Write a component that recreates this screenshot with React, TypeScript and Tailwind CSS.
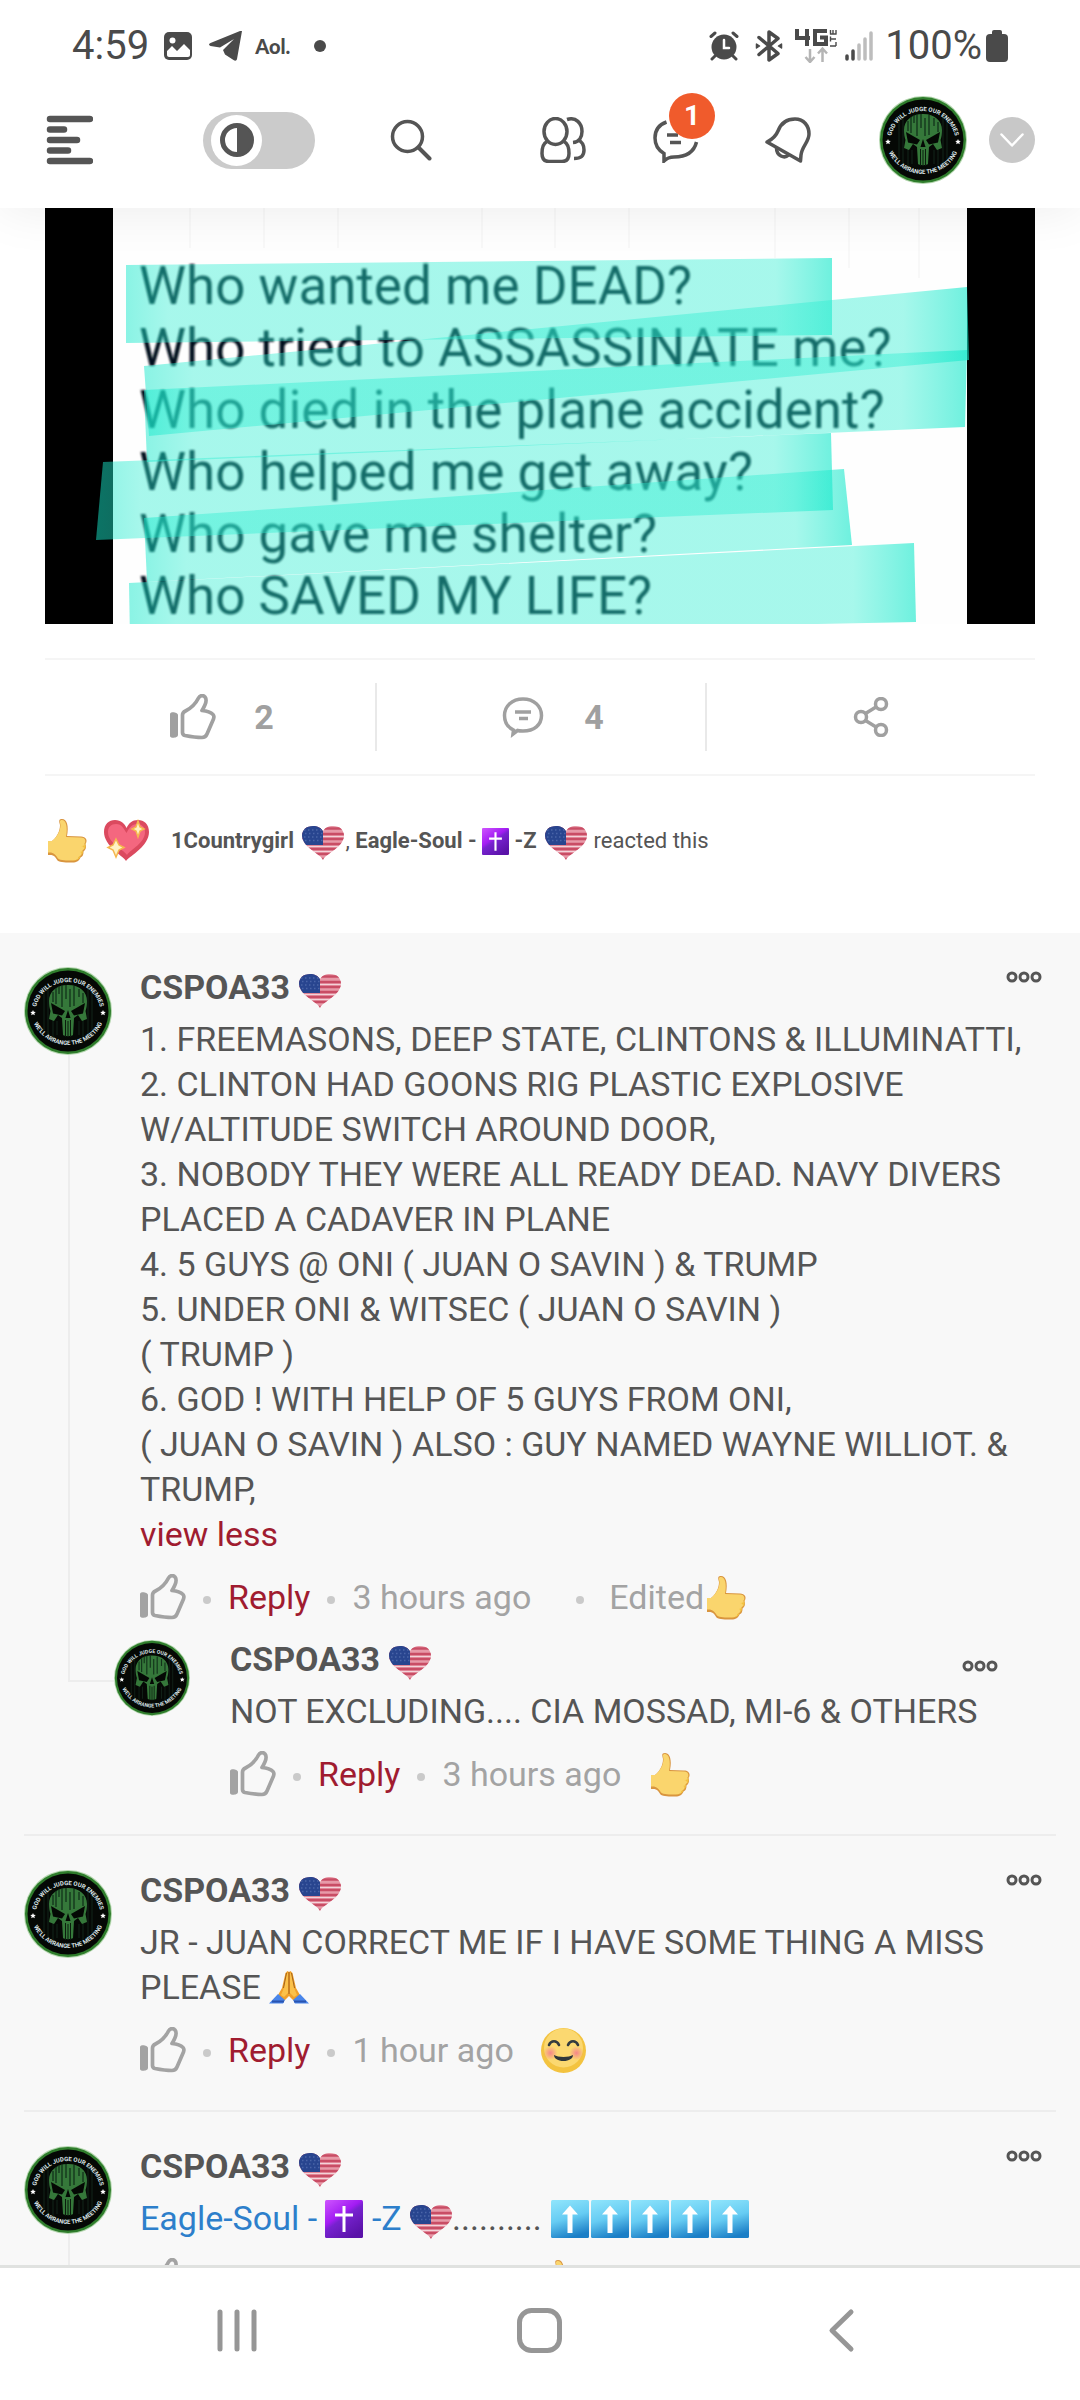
import { useId } from 'react';
import type { ReactNode } from 'react';
import clsx from 'clsx';

type Reaction = 'like' | 'blush';

interface CommentData {
  id: number;
  body: ReactNode;
  expanded?: boolean;
  time: string;
  edited?: boolean;
  reaction: Reaction;
  hasThread?: boolean;
  replies?: CommentData[];
}

/* ---------- emoji ---------- */

function FlagHeart({ className }: { className?: string }) {
  const id = useId();
  return (
    <svg viewBox="0 0 42 34" className={clsx('inline-block h-[34px] w-[42px] shrink-0', className ?? 'align-[-9px]')} role="img" aria-label="US flag heart">
      <clipPath id={id}>
        <path d="M21 34C19 28 1 22 0 10 0 4 4 0 11 0c5 0 8 2 10 5 2-3 5-5 10-5 7 0 11 4 11 10-1 12-19 18-21 24Z" />
      </clipPath>
      <g clipPath={`url(#${id})`}>
        <rect width="42" height="34" fill="#e79aa8" />
        <path d="M0 2.5h42M0 8h42M0 13h42M0 18h42M0 23h42M0 28h42M0 33h42" stroke="#c94d65" strokeWidth="2.4" />
        <path d="M21 10.5h21M0 20.5h42M0 25.5h42" stroke="#f3d3d9" strokeWidth="1" />
        <rect width="21" height="19" fill="#28458f" />
        <path d="M2 4h18M3 7.5h18M2 11h18M3 14.5h18" stroke="#4a65a8" strokeWidth="1.4" strokeDasharray="1.5 2.5" />
      </g>
    </svg>
  );
}

function CrossEmoji({ small }: { small?: boolean }) {
  const id = useId();
  return (
    <svg
      viewBox="0 0 38 38"
      className={clsx('inline-block shrink-0', small ? 'size-[27px] align-[-7px]' : 'size-[38px] align-[-8px]')}
      role="img"
      aria-label="cross"
    >
      <defs>
        <linearGradient id={id} x1="0" y1="0" x2="0.7" y2="1">
          <stop offset="0" stopColor="#cf55ff" />
          <stop offset="0.45" stopColor="#a21cf2" />
          <stop offset="0.55" stopColor="#7722cf" />
          <stop offset="1" stopColor="#5a12a8" />
        </linearGradient>
      </defs>
      <rect width="38" height="38" rx="1.5" fill={`url(#${id})`} />
      <path d="M19 6v26M10 15h18" stroke="#fff" strokeWidth="3" />
    </svg>
  );
}

function UpArrowEmoji() {
  const id = useId();
  return (
    <svg viewBox="0 0 38 38" className="mx-px inline-block size-[38px] align-[-8px]" role="img" aria-label="up">
      <defs>
        <linearGradient id={id} x1="0.2" y1="0" x2="0.5" y2="1">
          <stop offset="0" stopColor="#8de3fb" />
          <stop offset="0.5" stopColor="#66ccf3" />
          <stop offset="1" stopColor="#1b7ec6" />
        </linearGradient>
      </defs>
      <rect width="38" height="38" rx="1.5" fill={`url(#${id})`} />
      <path d="M19 5.500 27 14.500h-5.500V33h-5V14.500H11Z" fill="#fff" />
    </svg>
  );
}

function PrayEmoji() {
  return (
    <svg viewBox="0 0 40 34" className="inline-block h-[34px] w-10 align-[-5px]" role="img" aria-label="praying hands">
      <path d="M18.500 1 16.500 3 13 18 9 25l6 6 5-5 5 5 6-6-4-7L23.500 3 21.500 1 20 2Z" fill="#f0a02a" />
      <path d="M17.500 4 14.500 19 12 25l3 2 4-4V3ZM22.500 4l3 15 2.500 6-3 2-4-4V3Z" fill="#fbc14a" />
      <path d="M20 2v22M17.500 3 14.500 18M22.500 3l3 15" stroke="#a5631a" strokeWidth="1" fill="none" />
      <path d="M9 24 0 33.500h14L16 30ZM31 24l9 9.500H26L24 30Z" fill="#4a86ea" />
      <path d="M3 31.500h12M37 31.500H25" stroke="#2a54b0" strokeWidth="2" />
    </svg>
  );
}

function ThumbEmoji() {
  return (
    <svg viewBox="0 0 45 45" className="size-[45px] shrink-0" role="img" aria-label="Like reaction">
      <path
        d="M3 23h4c5-4 8-10 8-16-1-4-1.500-6 2-6 5 0 7 7 5 17l14 .5c5 0 7 4 4.500 7.500 1 3 .5 5.500-2 7.500 0 3-.5 5-3 6-1 3-4 5-8 5-6 0-12 0-15-2-2-3-3-5-6-5.500H3Z"
        fill="#d9953f"
      />
      <path
        d="M3 23h4c5-4 8.500-10 8.500-16C14.800 3.500 14.500 2 17 2c4 0 6 7 4 17l15 .5c4 0 5.500 3.500 3.500 6 1 3 0 5.500-2 7-.5 3-1 5-3 6-1 3-4 4-7 4-6 0-12 0-14.500-2-2-3-4-5.500-7-6H3Z"
        fill="#fad56d"
      />
      <path d="M41 24c0 3-2 4-5 4 4 .5 4.500 5-1 6 3 1 1.500 5-2 5 1 3-5 4-8 4h4c3-1 6-2 6.500-5 2-1 2.500-3 2.500-5.500 3-2 3-5 2-7Z" fill="#f3c141" />
    </svg>
  );
}

function SparkHeartEmoji() {
  return (
    <svg viewBox="0 0 45 45" className="size-[45px] shrink-0" role="img" aria-label="Love reaction">
      <path d="M22 43C18 37 0 28 0 14 0 6 5 2 11 2c6 0 10 4 11.500 8C25 5 28 2 34 2c6 0 11 4 11 12 0 14-18 23-23 29Z" fill="#db4a5f" />
      <path d="M23 37C19 31 4 25 4 14c0-5 3-8 8-8 6 0 8 5 10.500 9C25 10 28 6 33 6c5 0 8 3 8 8 0 11-14 17-18 23Z" fill="#f4677f" />
      <path d="m34 3 2 6 4 2-4 2-2 6-2-6-4-2 4-2ZM12 21l3 6 5 2.500-5 2.500-3 7-3-7-5-2.500L9 27Z" fill="#fff2c4" stroke="#f5b84e" strokeWidth="1.500" />
    </svg>
  );
}

function BlushEmoji() {
  const id = useId();
  return (
    <svg viewBox="0 0 45 45" className="size-[45px] shrink-0" role="img" aria-label="Happy reaction">
      <radialGradient id={id}>
        <stop offset="0" stopColor="#f4868a" />
        <stop offset="1" stopColor="#f4868a" stopOpacity="0" />
      </radialGradient>
      <circle cx="22.500" cy="22.500" r="22.500" fill="#f3c340" />
      <circle cx="22.500" cy="20" r="19.500" fill="#fbd870" />
      <circle cx="9.500" cy="25" r="7" fill={`url(#${id})`} />
      <circle cx="35.500" cy="25" r="7" fill={`url(#${id})`} />
      <path d="M8 17c2-5 8-5 10 0M27 17c2-5 8-5 10 0" stroke="#333b3f" strokeWidth="2.600" fill="none" strokeLinecap="round" />
      <path d="M13 27c4 2.500 15 2.500 19 0 0 3.500-4 6-9.500 6S13 30.500 13 27Z" fill="#2f373b" />
    </svg>
  );
}

/* ---------- icons ---------- */

function ThumbIcon() {
  return (
    <svg viewBox="0 0 46 46" className="size-[46px]" fill="none" stroke="currentColor" strokeWidth="3.700" strokeLinejoin="round" aria-hidden="true">
      <path d="M0 20c0-3 8-2 8 1v20c0 3-8 4-8 1Z" fill="currentColor" stroke="none" />
      <path d="M12.500 21c0-2 1-3 3-4 6-3 10-7 13-13 1.500-3 5-3 6.500-1 2.500 3 .5 8-3 13.500 5 .5 9 2 11 4 1.500 1.500 1 3 .5 4.500L37 40c-1 2.500-2 3.500-5 3.500-7 0-12-1-17-2-2-.5-2.500-1-2.500-3Z" />
    </svg>
  );
}

function CommentIcon() {
  return (
    <svg viewBox="0 0 42 42" className="size-[42px]" fill="none" stroke="currentColor" strokeWidth="3.500" aria-hidden="true">
      <path d="M11.500 34C5 31 2.500 26 2.500 19.500 2.500 10 10 3 21 3s18.500 7 18.500 16.500-7.500 15.500-18.500 15.500c-2 0-4 0-5.500-.5L11 38Z" />
      <path d="M13 16h16M17 22.500h9" />
    </svg>
  );
}

function ShareIcon() {
  return (
    <svg viewBox="0 0 36 40" className="h-10 w-9" fill="none" stroke="currentColor" strokeWidth="3.500" aria-hidden="true">
      <circle cx="28" cy="7" r="5.500" />
      <circle cx="28" cy="33" r="5.500" />
      <circle cx="8" cy="20" r="5.500" />
      <path d="m12.500 16.500 10.500-6.500M12.500 23.500 23 30" />
    </svg>
  );
}

function Avatar({ className }: { className?: string }) {
  const id = useId();
  return (
    <svg viewBox="0 0 88 88" className={clsx('shrink-0', className)} role="img" aria-label="CSPOA33">
      <defs>
        <path id={`${id}t`} d="M11 48a33 33 0 1 1 66 0" />
        <path id={`${id}b`} d="M6 40a38 38 0 1 0 76 0" />
      </defs>
      <circle cx="44" cy="44" r="44" fill="#b3d6ae" />
      <circle cx="44" cy="44" r="43" fill="#2f7d2c" />
      <circle cx="44" cy="44" r="40.500" fill="#050805" />
      <path d="M20 25v38M24 20v48M29 52v20M33 54v14M55 54v14M59 52v20M64 20v48M68 25v38" stroke="#13241a" strokeWidth="1" />
      {/* skull */}
      <path
        d="M44 18c-12 0-19 7-19 16 0 4 .5 7 1.500 10l-1.500 8 5 2 4-6 4 3 1 17c1.500 1.500 8.500 1.500 10 0l1-17 4-3 4 6 5-2-1.500-8c1-3 1.500-6 1.500-10 0-9-7-16-19-16Z"
        fill="#35783a"
      />
      <path d="M27 36l14 8-3 4.500-9-2ZM61 36l-14 8 3 4.500 9-2ZM44 43l2.500 8h-5Z" fill="#040804" />
      <path d="M41.500 53v17M44 54v16M46.500 53v17" stroke="#0b1c0d" strokeWidth="1" />
      <path d="M29 25v10M32 21v16M35 19v8M38 18v22M42 18v14M46 22v18M50 19v20M55 22v8M59 26v10" stroke="#12321a" strokeWidth="1.300" />
      <g fill="#dde6ea" className="font-['Roboto',sans-serif] text-[6px] font-bold" textAnchor="middle">
        <text>
          <textPath href={`#${id}t`} startOffset="50%">GOD WILL JUDGE OUR ENEMIES</textPath>
        </text>
        <text>
          <textPath href={`#${id}b`} startOffset="50%">WE'LL ARRANGE THE MEETING</textPath>
        </text>
      </g>
      <path d="m9 43 .8 1.800 2 .2-1.500 1.300.5 2-1.800-1-1.800 1 .5-2L6.200 45l2-.2ZM79 43l.8 1.800 2 .2-1.500 1.300.5 2-1.800-1-1.800 1 .5-2-1.500-1.300 2-.2Z" fill="#fff" />
    </svg>
  );
}

/* ---------- header ---------- */

function StatusBar() {
  return (
    <div className="flex h-[72px] items-center px-[72px] pt-5 text-[#4a4a4a]">
      <span className="text-[40px] leading-none">4:59</span>
      <svg viewBox="0 0 30 30" className="ml-3.5 size-[30px]" aria-hidden="true">
        <rect x="1" y="1" width="28" height="28" rx="5" fill="currentColor" />
        <circle cx="9.500" cy="9.500" r="3" fill="#fff" />
        <path d="M4 20l5-5 5 5 7-7 6 6v5c0 1-1 2-2 2H6c-1 0-2-1-2-2Z" fill="#fff" />
      </svg>
      <svg viewBox="0 0 34 30" className="ml-4 h-[30px] w-[34px]" aria-hidden="true">
        <path d="M33 0 28 28c-.5 2-2 2-3.500 1L16 23.500 14 19 25 8 11 16.500 1.500 15c-2-1-2-2 0-3L31 0Z" fill="currentColor" />
      </svg>
      <span className="ml-3 font-['Lato',sans-serif] text-[20px] leading-none font-black">Aol.</span>
      <span className="ml-6 size-3 rounded-full bg-[#4a4a4a]" />

      <svg viewBox="0 0 30 30" className="ml-auto size-[30px]" fill="none" stroke="currentColor" strokeLinecap="round" aria-hidden="true">
        <circle cx="15" cy="16" r="12.500" fill="currentColor" stroke="none" />
        <path d="M2 5.500 6 2M28 5.500 24 2M6 25l-3 3M24 25l3 3" strokeWidth="3" />
        <path d="M15 9v8h5" stroke="#fff" strokeWidth="2.500" />
      </svg>
      <svg viewBox="0 0 28 32" className="ml-4 h-8 w-7" fill="none" stroke="currentColor" strokeWidth="3.500" strokeLinejoin="round" strokeLinecap="round" aria-hidden="true">
        <path d="M4 7.500 23 23.500l-9 6.500V2l9 6.500L4 24.500" />
        <path d="m1.500 14 3 2-3 2ZM26.500 14l-3 2 3 2Z" strokeWidth="1.500" fill="currentColor" />
      </svg>
      <svg viewBox="0 0 42 34" className="ml-3 h-[34px] w-[42px]" aria-label="4G LTE">
        <path d="M2 0v9h13M12 0v17" stroke="currentColor" strokeWidth="4" fill="none" />
        <path d="M32 2H20v13h11V8.500h-6" stroke="currentColor" strokeWidth="4" fill="none" />
        <path d="M35 17h6M41 17v-4M35 10h6M35.500 12.500v-5M35.500 5.500V1M41 5.500V1M38 5V1M35 5h6.500" stroke="currentColor" strokeWidth="1.400" fill="none" />
        <path d="M15 20v12M10.500 28l4.500 5 4.500-5M27.500 33V20M23 24.500l4.500-5 4.500 5" stroke="#b5b5b5" strokeWidth="2.500" fill="none" />
      </svg>
      <svg viewBox="0 0 28 30" className="ml-2 h-[30px] w-7" strokeWidth="3.500" strokeLinecap="round" aria-hidden="true">
        <path d="M2 25v3M8 20v8" stroke="#4a4a4a" />
        <path d="M14 14v14M20 8v20M26 2v26" stroke="#bdbdbd" />
      </svg>
      <span className="ml-3 text-[40px] leading-none">100%</span>
      <svg viewBox="0 0 22 32" className="ml-1 h-8 w-[22px]" fill="currentColor" aria-hidden="true">
        <rect x="6" width="10" height="8" rx="2" />
        <rect y="4" width="22" height="28" rx="4" />
      </svg>
    </div>
  );
}

function AppBar() {
  return (
    <div className="flex h-[136px] items-center justify-between px-[45px] text-[#555]">
      <div className="flex items-center">
        <button type="button" aria-label="Menu">
          <svg viewBox="0 0 48 50" className="h-[50px] w-12" stroke="currentColor" strokeWidth="6.500" strokeLinecap="round" aria-hidden="true">
            <path d="M5 4h40M5 14.500h14M5 25h27M5 35.500h18M5 46h40" />
          </svg>
        </button>
        <label className="ml-[110px] block cursor-pointer">
          <input type="checkbox" className="peer sr-only" aria-label="Dark mode" />
          <span className="flex h-[57px] w-28 items-center rounded-full bg-[#cbcbcb] pl-2 peer-checked:justify-end peer-checked:pr-2">
            <span className="flex size-[51px] items-center justify-center rounded-full bg-white">
              <svg viewBox="0 0 34 34" className="size-[34px]" aria-hidden="true">
                <circle cx="17" cy="17" r="14.500" fill="none" stroke="currentColor" strokeWidth="5" />
                <path d="M17 2a15 15 0 0 1 0 30Z" fill="currentColor" />
              </svg>
            </span>
          </span>
        </label>
        <button type="button" aria-label="Search" className="ml-[75px]">
          <svg viewBox="0 0 42 42" className="size-[42px]" fill="none" stroke="currentColor" strokeWidth="3.500" strokeLinecap="round" aria-hidden="true">
            <circle cx="17.500" cy="17.500" r="15" />
            <path d="m29 29 10.500 10.500" strokeWidth="4" />
          </svg>
        </button>
      </div>

      <div className="flex items-center">
        <button type="button" aria-label="Friends">
          <svg viewBox="0 0 46 46" className="size-[46px]" fill="none" stroke="currentColor" strokeWidth="3.500" aria-hidden="true">
            <ellipse cx="15.500" cy="14.500" rx="11.500" ry="13" />
            <path d="M7 24.500c-4 2-5 6-5 12 0 5 2 8 7 8h13c5 0 7-3 7-8 0-6-1-10-5-12" />
            <path d="M27 2.500c9-3 15 4 15 12 0 6-3 10.500-9 11M38 23c5 2 6 6 6 10 0 6-3 8.500-10 8.500" />
          </svg>
        </button>
        <button type="button" aria-label="Messages, 1 unread" className="relative ml-[67px]">
          <svg viewBox="0 0 46 46" className="size-[46px]" fill="none" stroke="currentColor" strokeWidth="3.500" aria-hidden="true">
            <path d="M13.500 5C5 8 2 14 2 21c0 7 3 12 9 15.500v7.500c3-3 6-4 10-4 13 0 20-5 22.500-15M14 18h11M17 25.500h11" />
          </svg>
          <span className="absolute -top-6 left-4 flex size-[46px] items-center justify-center rounded-full bg-[#f05b2c] text-[28px] leading-none font-bold text-white">
            1
          </span>
        </button>
        <button type="button" aria-label="Notifications" className="ml-[66px]">
          <svg viewBox="0 0 46 46" className="size-[46px]" fill="none" stroke="currentColor" strokeWidth="3.500" strokeLinejoin="round" aria-hidden="true">
            <path d="M2 25c6-3 9-6 11-11C16 6 22 2 30 2c9 0 14 7 14 15 0 8-7 12-8 21l-.5 6Z" />
            <path d="M11.500 31c0 8 8 11 12 7" />
          </svg>
        </button>
        <Avatar className="ml-[68px] size-[88px]" />
        <button type="button" aria-label="Account menu" className="ml-[22px] flex size-[46px] items-center justify-center rounded-full bg-[#c8c8c8]">
          <svg viewBox="0 0 24 14" className="w-6" fill="none" stroke="#fff" strokeWidth="2.500" strokeLinecap="round" strokeLinejoin="round" aria-hidden="true">
            <path d="m1.500 1.500 10.500 11 10.500-11" />
          </svg>
        </button>
      </div>
    </div>
  );
}

/* ---------- post ---------- */

const QUESTIONS = [
  'Who wanted me DEAD?',
  'Who tried to ASSASSINATE me?',
  'Who died in the plane accident?',
  'Who helped me get away?',
  'Who gave me shelter?',
  'Who SAVED MY LIFE?',
];

const HIGHLIGHTS = [
  '81,57 787,50 787,127 81,135',
  '99,158 350,134 922,79 924,152 104,228',
  '99,182 922,142 920,219 102,254',
  '58,254 786,225 788,302 51,332',
  '99,310 799,261 807,337 102,374',
  '84,375 869,335 871,414 85,430',
];

function PostImage() {
  const id = useId();
  return (
    <svg viewBox="0 0 990 416" className="block w-full" role="img" aria-label="Highlighted list of questions">
      <defs>
        <linearGradient id={id}>
          <stop offset="0" stopColor="#16e8cb" stopOpacity="0.5" />
          <stop offset="0.06" stopColor="#2eeed2" stopOpacity="0.42" />
          <stop offset="0.92" stopColor="#2eeed2" stopOpacity="0.42" />
          <stop offset="1" stopColor="#16e8cb" stopOpacity="0.62" />
        </linearGradient>
        <filter id={`${id}soft`}>
          <feGaussianBlur stdDeviation="1" />
        </filter>
      </defs>
      <rect width="990" height="416" fill="#000" />
      <rect x="68" width="854" height="416" fill="#fefefe" />
      <path d="M145 0v40M219 0v40M293 0v40M437 0v40M510 0v40M584 0v40M730 0v50M804 0v60M874 0v70" stroke="#f8f8f8" strokeWidth="2" />
      <g className="font-['Roboto',sans-serif] text-[53px]" fill="#04101a" filter={`url(#${id}soft)`}>
        {QUESTIONS.map((q, i) => (
          <text key={q} x="94" y={96 + i * 62}>
            {q}
          </text>
        ))}
      </g>
      {HIGHLIGHTS.map((points) => (
        <polygon key={points} points={points} fill={`url(#${id})`} />
      ))}
    </svg>
  );
}

function PostActions() {
  return (
    <div className="mt-[34px] grid grid-cols-3 border-y-2 border-[#f5f5f5] py-[23px] text-[34px] leading-none font-bold text-[#a0a0a0]">
      <button type="button" aria-label="Like, 2" className="flex h-[68px] items-center justify-center gap-[38px] pl-6">
        <ThumbIcon />2
      </button>
      <button type="button" aria-label="Comments, 4" className="flex h-[68px] items-center justify-center gap-10 border-l-2 border-[#e9e9e9] pl-6">
        <CommentIcon />4
      </button>
      <button type="button" aria-label="Share" className="flex h-[68px] items-center justify-center border-l-2 border-[#e9e9e9]">
        <ShareIcon />
      </button>
    </div>
  );
}

function ReactionSummary() {
  return (
    <div className="flex items-center gap-3.5 pt-[42px] pb-[70px]">
      <ThumbEmoji />
      <SparkHeartEmoji />
      <p className="ml-2 text-[22px] leading-[45px] text-[#555]">
        <a href="#1countrygirl" className="font-bold">
          1Countrygirl <FlagHeart className="mr-px ml-[3px] align-[-12px]" />
        </a>
        ,{' '}
        <a href="#eagle-soul" className="font-bold">
          Eagle-Soul - <CrossEmoji small /> -Z <FlagHeart className="mr-px ml-[3px] align-[-12px]" />
        </a>{' '}
        reacted this
      </p>
    </div>
  );
}

/* ---------- comments ---------- */

const COMMENTS: CommentData[] = [
  {
    id: 1,
    body: `1. FREEMASONS, DEEP STATE, CLINTONS & ILLUMINATTI,
2. CLINTON HAD GOONS RIG PLASTIC EXPLOSIVE W/ALTITUDE SWITCH AROUND DOOR,
3. NOBODY THEY WERE ALL READY DEAD. NAVY DIVERS PLACED A CADAVER IN PLANE
4. 5 GUYS @ ONI ( JUAN O SAVIN ) & TRUMP
5. UNDER ONI & WITSEC ( JUAN O SAVIN )
( TRUMP )
6. GOD ! WITH HELP OF 5 GUYS FROM ONI,
( JUAN O SAVIN ) ALSO : GUY NAMED WAYNE WILLIOT. & TRUMP,`,
    expanded: true,
    time: '3 hours ago',
    edited: true,
    reaction: 'like',
    hasThread: true,
    replies: [
      {
        id: 2,
        body: 'NOT EXCLUDING.... CIA MOSSAD, MI-6 & OTHERS',
        time: '3 hours ago',
        reaction: 'like',
      },
    ],
  },
  {
    id: 3,
    body: (
      <>
        JR - JUAN CORRECT ME IF I HAVE SOME THING A MISS PLEASE <PrayEmoji />
      </>
    ),
    time: '1 hour ago',
    reaction: 'blush',
  },
  {
    id: 4,
    body: (
      <>
        <a href="#eagle-soul" className="text-[#2d7fcb]">
          Eagle-Soul - <CrossEmoji /> -Z <FlagHeart />
        </a>
        .......... <UpArrowEmoji />
        <UpArrowEmoji />
        <UpArrowEmoji />
        <UpArrowEmoji />
        <UpArrowEmoji />
      </>
    ),
    time: '1 hour ago',
    reaction: 'like',
    hasThread: true,
  },
];

function Dot({ className }: { className?: string }) {
  return <span className={clsx('mt-1.5 size-2 shrink-0 rounded-full bg-[#cacaca]', className)} />;
}

function CommentContent({ comment, nested }: { comment: CommentData; nested?: boolean }) {
  const emoji = comment.reaction === 'like' ? <ThumbEmoji /> : <BlushEmoji />;
  return (
    <div className="min-w-0 flex-1">
      <div className="flex h-[45px]">
        <a href="#cspoa33" className="font-bold">
          CSPOA33 <FlagHeart />
        </a>
        <button type="button" aria-label="Comment options" className={clsx('ml-auto', nested ? 'h-8 self-end' : 'h-6 self-start')}>
          <svg viewBox="0 0 36 12" className="h-3 w-9" fill="none" stroke="currentColor" strokeWidth="3" aria-hidden="true">
            <circle cx="6" cy="6" r="4" />
            <circle cx="18" cy="6" r="4" />
            <circle cx="30" cy="6" r="4" />
          </svg>
        </button>
      </div>
      <p className="mt-[7px] whitespace-pre-line">{comment.body}</p>
      {comment.expanded && (
        <button type="button" className="block text-[#a01c30]">
          view less
        </button>
      )}
      <div className="mt-[17px] flex items-center gap-[17px] text-[#a3a3a3]">
        <button type="button" aria-label="Like">
          <ThumbIcon />
        </button>
        <Dot />
        <button type="button" className="text-[#a01c30]">
          Reply
        </button>
        <Dot />
        <span>{comment.time}</span>
        {comment.edited ? (
          <>
            <Dot className="ml-7" />
            <span className="ml-2 flex items-center">Edited{emoji}</span>
          </>
        ) : (
          <span className="ml-2.5">{emoji}</span>
        )}
      </div>
    </div>
  );
}

function Comment({ comment }: { comment: CommentData }) {
  return (
    <li className="border-b-2 border-[#ededed] pt-8 pb-[37px] last:border-b-0">
      <div className="flex gap-7 pr-3.5">
        <div className="flex flex-col pt-0.5">
          <Avatar className="size-[88px]" />
          {comment.hasThread && <span className="ml-11 w-0.5 flex-1 bg-[#ededed]" />}
        </div>
        <CommentContent comment={comment} />
      </div>
      {comment.replies?.map((reply) => (
        <div key={reply.id} className="flex pr-[58px]">
          <span className="ml-11 h-[62px] w-[46px] shrink-0 border-b-2 border-l-2 border-[#ededed]" />
          <Avatar className="mt-5 size-[76px]" />
          <div className="flex min-w-0 flex-1 pt-[17px] pl-10">
            <CommentContent comment={reply} nested />
          </div>
        </div>
      ))}
    </li>
  );
}

function SystemNav() {
  return (
    <nav className="relative flex h-[135px] shrink-0 items-start justify-between border-t-[3px] border-[#e0e2e0] bg-white px-[215px] pt-[38px] text-[#969696]">
      <button type="button" aria-label="Recent apps">
        <svg viewBox="0 0 44 48" className="h-12 w-11" stroke="currentColor" strokeWidth="5" strokeLinecap="round" aria-hidden="true">
          <path d="M5 6v37M22 6v37M39 6v37" />
        </svg>
      </button>
      <button type="button" aria-label="Home">
        <svg viewBox="0 0 48 48" className="size-12" fill="none" stroke="currentColor" strokeWidth="5" aria-hidden="true">
          <rect x="4.500" y="4.500" width="40" height="40" rx="12" />
        </svg>
      </button>
      <button type="button" aria-label="Back">
        <svg viewBox="0 0 46 48" className="h-12 w-[46px]" fill="none" stroke="currentColor" strokeWidth="5" strokeLinecap="round" strokeLinejoin="round" aria-hidden="true">
          <path d="M32 6 13 24.500 32 43" />
        </svg>
      </button>
    </nav>
  );
}

export default function App() {
  return (
    <div className="flex h-screen flex-col bg-white font-['Roboto',sans-serif]">
      <header className="relative z-10 shrink-0 bg-white shadow-[0_0_50px_rgba(0,0,0,0.08)]">
        <StatusBar />
        <AppBar />
      </header>
      <main className="min-h-0 flex-1 overflow-hidden">
        <article className="px-[45px]">
          <PostImage />
          <PostActions />
          <ReactionSummary />
        </article>
        <ul className="bg-[#f8f8f8] px-6 text-[34px] leading-[45px] text-[#555]">
          {COMMENTS.map((comment) => (
            <Comment key={comment.id} comment={comment} />
          ))}
        </ul>
      </main>
      <SystemNav />
    </div>
  );
}
